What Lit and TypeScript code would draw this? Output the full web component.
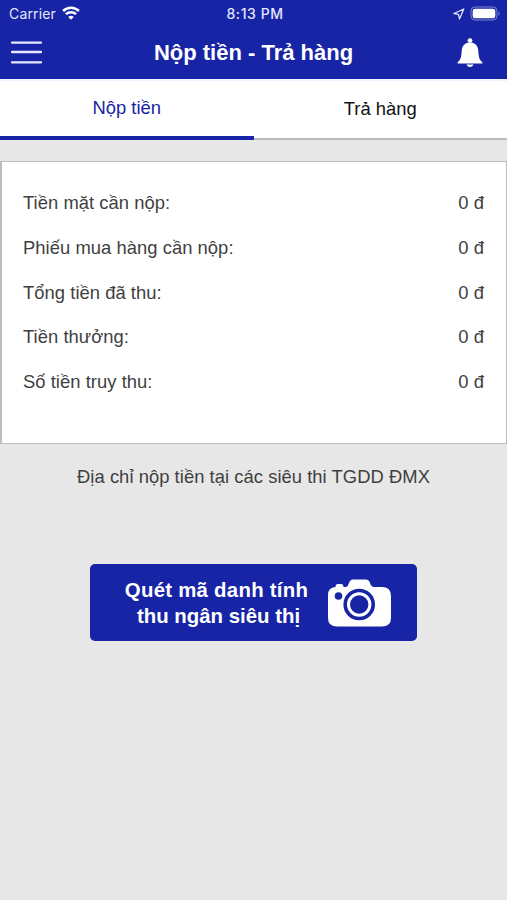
import { LitElement, html, css, svg } from "lit";
import { customElement, state } from "lit/decorators.js";
import { classMap } from "lit/directives/class-map.js";

const wifi = svg`<path d="M9 13.8 L6.2 11 A4.2 4.2 0 0 1 11.8 11 Z" fill="#fff"/>
  <path d="M3.9 8.2 A7.4 7.4 0 0 1 14.1 8.2 M1.1 5 A11.4 11.4 0 0 1 16.9 5" fill="none" stroke="#fff" stroke-width="2.5"/>`;

@customElement("app-root")
export class AppRoot extends LitElement {
  @state() private active = 0;

  private tabs = ["Nộp tiền", "Trả hàng"];

  private rows = [
    ["Tiền mặt cần nộp:", "0 đ"],
    ["Phiếu mua hàng cần nộp:", "0 đ"],
    ["Tổng tiền đã thu:", "0 đ"],
    ["Tiền thưởng:", "0 đ"],
    ["Số tiền truy thu:", "0 đ"],
  ];

  static styles = css`
    :host {
      display: flex;
      flex-direction: column;
      height: 900px;
      background: #e7e7e7;
      color: #3f3f3f;
      font-family: "Liberation Sans", Arial, sans-serif;
      font-size: 18.4px;
      line-height: 24px;
      overflow: hidden;
    }
    svg { display: block; flex: none; }
    button {
      border: 0;
      margin: 0;
      padding: 0;
      background: none;
      font: inherit;
      color: inherit;
    }
    .status {
      display: grid;
      grid-template-columns: 1fr auto 1fr;
      align-items: center;
      height: 27px;
      padding: 0 6px 0 9px;
      background: #1824a6;
      color: #e4e7ff;
      font-family: Inter, sans-serif;
      font-size: 14px;
      line-height: 27px;
    }
    .carrier { display: flex; align-items: center; gap: 6px; letter-spacing: 0.15px; }
    .time { font-weight: 500; letter-spacing: 0.55px; }
    .indicators { display: flex; align-items: center; justify-content: flex-end; gap: 5px; }
    .header {
      display: grid;
      grid-template-columns: 60px 1fr 60px;
      align-items: center;
      height: 52px;
      background: #1824a6;
      color: #fff;
    }
    .menu { padding-left: 11px; }
    .bell { padding-left: 10px; }
    .title {
      margin: 0;
      text-align: center;
      font-size: 22px;
      font-weight: 700;
    }
    .tabs {
      display: flex;
      height: 61px;
      background: #fff;
      box-shadow: inset 0 2px 0 #f0f2ff;
    }
    .tab {
      flex: 1;
      box-sizing: border-box;
      height: 61px;
      border-bottom: 2px solid #bcbcbc;
      color: #111;
    }
    .tab.active {
      border-bottom: 4px solid #1824a6;
      color: #1824a6;
      padding-top: 1px;
    }
    .summary {
      box-sizing: border-box;
      height: 283px;
      margin-top: 21px;
      padding: 19px 22px 0 21px;
      background: #fff;
      border: 1px solid #bdbdbd;
      border-left-width: 2px;
      letter-spacing: 0.04px;
    }
    .row {
      display: flex;
      justify-content: space-between;
      align-items: center;
      height: 44.7px;
    }
    .address { text-align: center; margin: 21px 0 0; letter-spacing: 0.04px; }
    .scan {
      display: flex;
      align-items: center;
      align-self: center;
      box-sizing: border-box;
      width: 327px;
      height: 77px;
      margin-top: 75px;
      padding-left: 34px;
      gap: 19px;
      border-radius: 5px;
      background: #1824a6;
      color: #fff;
      font-size: 20.4px;
      font-weight: 700;
      line-height: 26px;
    }
    .label { width: 185px; white-space: nowrap; display: flex; flex-direction: column; align-items: center; }
    .first { letter-spacing: 0.26px; }
    .second { padding-left: 4px; }
  `;

  render() {
    return html`
      <div class="status">
        <div class="carrier"><span>Carrier</span>
          <svg width="18" height="16" viewBox="0 0 18 16">${wifi}</svg>
        </div>
        <span class="time">8:13 PM</span>
        <div class="indicators">
          <svg width="12" height="12" viewBox="0 0 12 12">
            <path d="M10.8 1 L0.9 5.5 L5.5 6.4 L6.5 10.9 Z" fill="none" stroke="#dfe3ff" stroke-width="1.3" stroke-linejoin="round"/>
          </svg>
          <svg width="31" height="15" viewBox="0 0 31 15">
            <rect x="1" y="1" width="26" height="13" rx="4" fill="none" stroke="#7d85d0" stroke-width="1"/>
            <rect x="2.7" y="2.7" width="22.6" height="9.6" rx="2.3" fill="#fff"/>
            <path d="M28.6 5.2 Q31 7.5 28.6 9.8 Z" fill="#7d85d0"/>
          </svg>
        </div>
      </div>
      <header class="header">
        <button class="menu" aria-label="Menu">
          <svg width="31" height="26" viewBox="0 0 31 26">
            <path d="M1 2.6 H30 M1 12 H30 M1 22.3 H30" stroke="#e6e9ff" stroke-width="2.3" stroke-linecap="round"/>
          </svg>
        </button>
        <h1 class="title">Nộp tiền - Trả hàng</h1>
        <button class="bell" aria-label="Thông báo">
          <svg width="26" height="30" viewBox="0 0 26 30">
            <circle cx="13" cy="2.6" r="2.4" fill="#fff"/>
            <path d="M10.2 4.8 H15.8 C19.8 6.4 21 9.2 21.3 13 C21.7 19 22.3 21.8 25.3 24 V25.4 H.7 V24 C3.7 21.8 4.3 19 4.7 13 C5 9.2 6.2 6.4 10.2 4.8 Z M9.6 26.6 H16.4 C15.8 29.8 10.2 29.8 9.6 26.6 Z" fill="#fff"/>
          </svg>
        </button>
      </header>
      <nav class="tabs">
        ${this.tabs.map((t, i) => html`
          <button class=${classMap({ tab: true, active: i === this.active })} @click=${() => (this.active = i)}>${t}</button>`)}
      </nav>
      <section class="summary">
        ${this.rows.map(([k, v]) => html`<div class="row"><span>${k}</span><span>${v}</span></div>`)}
      </section>
      <p class="address">Địa chỉ nộp tiền tại các siêu thi TGDD ĐMX</p>
      <button class="scan">
        <span class="label"><span class="first">Quét mã danh tính</span><span class="second">thu ngân siêu thị</span></span>
        <svg width="63" height="48" viewBox="0 0 63 48">
          <path d="M0 16 Q0 8.5 7.5 8 Q7.5 5 10 5 H13 Q15.5 5 15.5 8 H18 Q20 7.6 21 4 Q22 .5 25 .5 H38 Q41 .5 42 4 Q43 7.6 45.5 8 H54 Q63 8 63 17 V39 Q63 47.5 54 47.5 H9 Q0 47.5 0 39 Z" fill="#fff"/>
          <circle cx="10.5" cy="17" r="3.8" fill="#1824a6"/>
          <circle cx="31.2" cy="25.5" r="14" fill="#fff" stroke="#1824a6" stroke-width="3.6"/>
          <circle cx="31.2" cy="25.5" r="9.2" fill="#1824a6"/>
        </svg>
      </button>
    `;
  }
}
